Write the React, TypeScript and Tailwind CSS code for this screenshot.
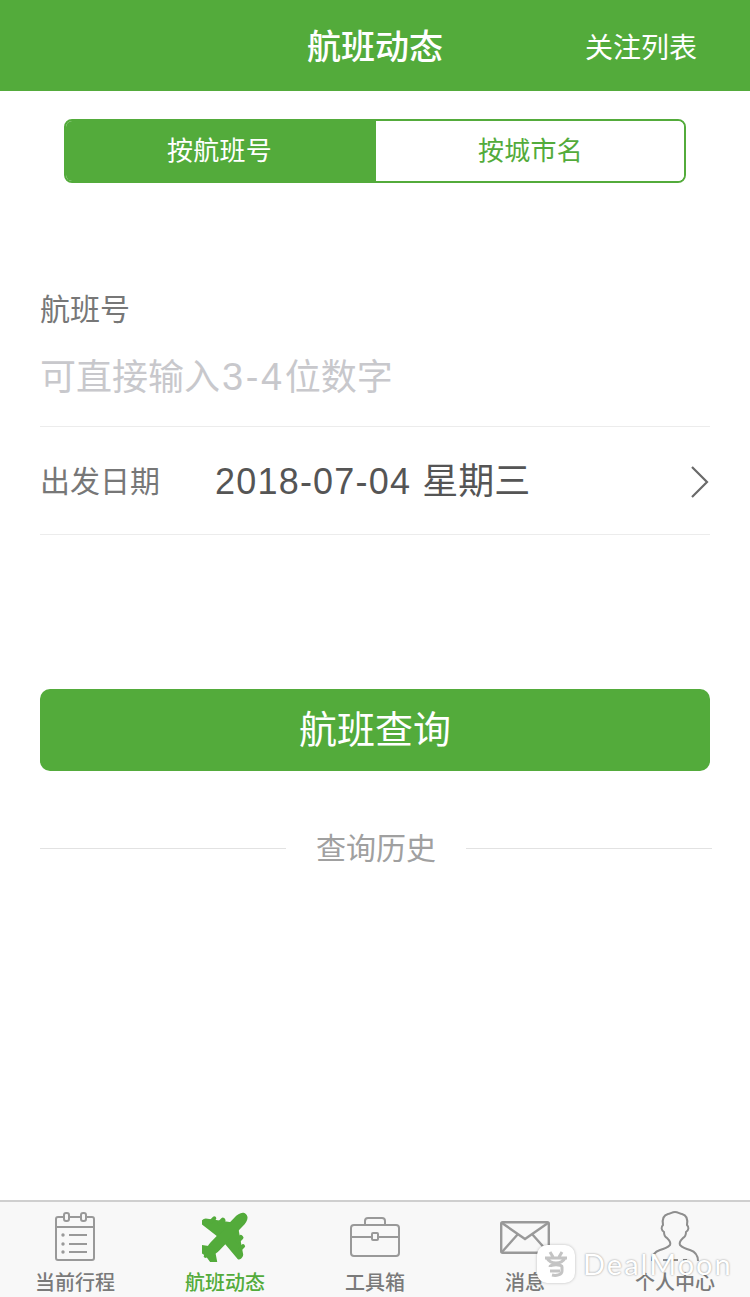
import React from "react";

const G = "#53ab3b";

function TabItem({ label, active, children }: { label: string; active?: boolean; children: React.ReactNode }) {
  return (
    <div className="flex flex-1 flex-col items-center">
      <div className="flex h-[56px] w-full items-center justify-center">{children}</div>
      <div className={`mt-[5px] text-[20px] leading-[26px] font-medium ${active ? "text-[#53ab3b]" : "text-[#7a7a7a]"}`}>{label}</div>
    </div>
  );
}

export default function App() {
  return (
    <div className="relative flex h-[1297px] w-[750px] flex-col overflow-hidden bg-white font-['Liberation_Sans','Noto_Sans_CJK_SC',sans-serif]">
      <header className="relative flex h-[91px] shrink-0 items-center justify-center bg-[#53ab3b]">
        <div className="pt-[2px] text-[34px] leading-[44px] font-medium text-white">航班动态</div>
        <div className="absolute right-[53px] top-[31px] text-[28px] leading-[36px] text-white">关注列表</div>
      </header>

      <div className="mx-[64px] mt-[28px] flex h-[64px] overflow-hidden rounded-[8px] border-2 border-[#53ab3b]">
        <div className="flex w-[310px] items-center justify-center bg-[#53ab3b] pr-[3px] text-[26px] tracking-[0.3px] text-white">按航班号</div>
        <div className="flex flex-1 items-center justify-center bg-white pl-[1px] text-[26px] tracking-[0.3px] text-[#53ab3b]">按城市名</div>
      </div>

      <div className="mx-[40px] mt-[107px] text-[30px] leading-[40px] text-[#777777]">航班号</div>
      <div className="mx-[40px] mt-[24px] h-[73px] border-b border-[#ececec] text-[36px] leading-[46px] text-[#c8c8cc]">
        可直接输入<span className="ml-[2px] text-[38px] tracking-[2.6px]">3-4</span>位数字
      </div>

      <div className="mx-[40px] flex h-[108px] items-center border-b border-[#ececec] pt-[2px]">
        <div className="w-[175px] text-[30px] text-[#777777]">出发日期</div>
        <div className="flex-1 text-[36px] text-[#555555]">
          <span className="tracking-[1.2px]">2018-07-04 </span>星期三
        </div>
        <svg width="20" height="34" viewBox="0 0 20 34" fill="none">
          <path d="M2 2 L17 17 L2 32" stroke="#6a6a6a" strokeWidth="2.2" />
        </svg>
      </div>

      <button className="mx-[40px] mt-[154px] flex h-[82px] shrink-0 items-center justify-center rounded-[10px] bg-[#53ab3b] text-[38px] text-white">航班查询</button>

      <div className="mx-[40px] mt-[56px] flex h-[42px] items-center">
        <div className="h-px w-[246px] bg-[#e2e2e2]" />
        <div className="flex-1 text-center text-[30px] text-[#a0a0a0]">查询历史</div>
        <div className="mr-[-2px] h-px w-[246px] bg-[#e2e2e2]" />
      </div>

      <nav className="mt-auto flex h-[97px] shrink-0 border-t-2 border-[#cfcfcf] bg-[#f8f8f8] pt-[7px]">
        <TabItem label="当前行程">
          <svg width="42" height="50" viewBox="0 0 42 50" fill="none" stroke="#999999" strokeWidth="2">
            <path d="M9 5H4a2 2 0 0 0-2 2v39a2 2 0 0 0 2 2h34a2 2 0 0 0 2-2V7a2 2 0 0 0-2-2h-5M15 5h12" />
            <rect x="10" y="1" width="5" height="8" rx="2" />
            <rect x="27" y="1" width="5" height="8" rx="2" />
            <path d="M2 15H40M15 23H33M15 32H33M15 40H33" />
            <circle cx="9" cy="23" r="1.7" fill="#999999" stroke="none" />
            <circle cx="9" cy="32" r="1.7" fill="#999999" stroke="none" />
            <circle cx="9" cy="40" r="1.7" fill="#999999" stroke="none" />
          </svg>
        </TabItem>
        <TabItem label="航班动态" active>
          <svg width="46" height="50" viewBox="0 0 46 50" fill={G}>
            <g transform="translate(22.5 24.5) rotate(44)">
              <path d="M0 -31C4.5 -31 6 -26 6 -20V14C6 20 3 25 1 29H-1C-3 25 -6 20 -6 14V-20C-6 -26 -4.5 -31 0 -31Z" />
              <path d="M-5 -15L-26 0C-28 2 -28 7 -25 7L-5 5ZM5 -15L26 0C28 2 28 7 25 7L5 5Z" />
              <path d="M-2 16L-12 23C-15 26 -14 29 -11 29L0 27L11 29C14 29 15 26 12 23L2 16Z" />
              <rect x="-15" y="-13" width="5" height="9" rx="2" />
              <rect x="10" y="-13" width="5" height="9" rx="2" />
              <rect x="-22" y="-8" width="4" height="8" rx="2" />
              <rect x="18" y="-8" width="4" height="8" rx="2" />
            </g>
          </svg>
        </TabItem>
        <TabItem label="工具箱">
          <svg width="50" height="40" viewBox="0 0 50 40" fill="none" stroke="#999999" strokeWidth="2">
            <rect x="1" y="8" width="48" height="31" rx="3" />
            <path d="M15 8V4a3 3 0 0 1 3-3h14a3 3 0 0 1 3 3v4M1 20H22M28 20H49" />
            <rect x="22" y="16" width="6" height="7" rx="1" />
          </svg>
        </TabItem>
        <TabItem label="消息">
          <svg width="50" height="33" viewBox="0 0 50 33" fill="none" stroke="#999999" strokeWidth="2.4">
            <rect x="1.2" y="1.2" width="47.6" height="30.6" rx="1.5" />
            <path d="M2 2 25 18 48 2M2 31 18 13M48 31 32 13" />
          </svg>
        </TabItem>
        <TabItem label="个人中心">
          <svg width="52" height="52" viewBox="0 0 52 52" fill="none" stroke="#8e8e8e" strokeWidth="2">
            <path d="M3 50c0-5 2-9 8-11 4-1 8-3 10-5 1-2 0-4-3-7-2-1-3-3-3-6-3-2-3-5-1-7-1-6 1-10 5-11 2 0 4-2 7-2 3 0 5 2 7 2 4 1 6 5 5 11 2 2 2 5-1 7 0 3-1 5-3 6-3 3-4 5-3 7 2 2 6 4 10 5 6 2 8 6 8 11" />
            <path d="M14 49H38" strokeDasharray="5 5" />
          </svg>
        </TabItem>
      </nav>

      <div className="absolute left-[537px] top-[1245px] flex items-center">
        <div className="flex h-[38px] w-[38px] items-center justify-center rounded-[10px] bg-white shadow-[0_0_3px_rgba(0,0,0,0.25)]">
          <svg width="28" height="28" viewBox="0 0 28 28" fill="none" stroke="#c4c4c4" strokeWidth="3">
            <path d="M8 2 11 7M20 2 17 7M3 8H25M5 8c2 4 5 5 9 5s7-1 9-5" />
            <path d="M8 17c0-3 12-3 12 0v4c0 4-6 5-10 4" />
            <path d="M8 21H18" />
          </svg>
        </div>
        <div className="ml-[8px] font-['Lato',sans-serif] text-[29px] leading-[36px] tracking-[2px] text-white [text-shadow:0_0_2px_rgba(0,0,0,0.45)]">DealMoon</div>
      </div>
    </div>
  );
}
